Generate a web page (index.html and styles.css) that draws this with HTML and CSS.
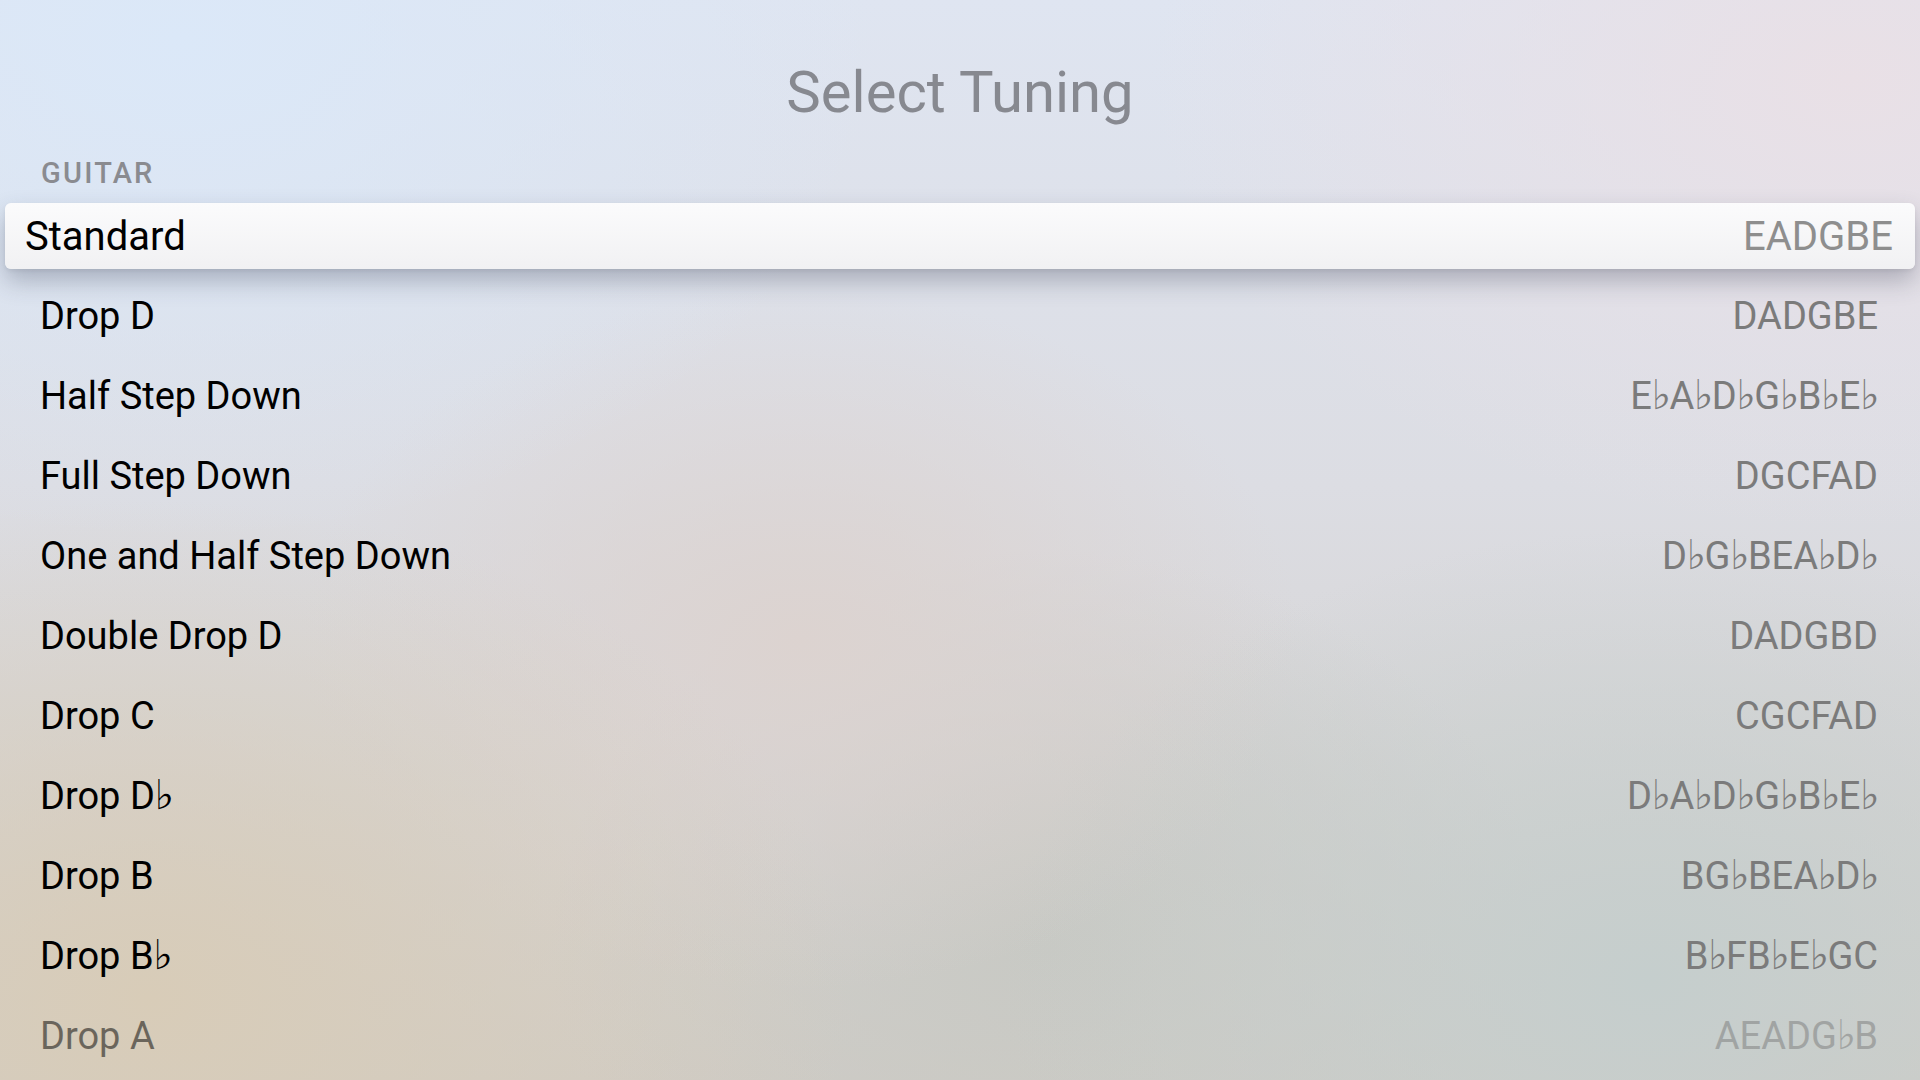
FILE: index.html
```html
<!DOCTYPE html>
<html lang="en">

<head>
    <title>Select Tuning</title>
    <link rel="stylesheet" href="styles.css">
</head>

<body>
    <div id="screen">
        <div class="title">
            <h1>Select Tuning</h1>
        </div>
        <div class="section">GUITAR</div>
        <div class="list">
            <div class="row focused">
                <span class="name">Standard</span>
                <span class="notes">EADGBE</span>
            </div>
            <div class="row">
                <span class="name">Drop D</span>
                <span class="notes">DADGBE</span>
            </div>
            <div class="row">
                <span class="name">Half Step Down</span>
                <span class="notes">E<i>♭</i>A<i>♭</i>D<i>♭</i>G<i>♭</i>B<i>♭</i>E<i>♭</i></span>
            </div>
            <div class="row">
                <span class="name">Full Step Down</span>
                <span class="notes">DGCFAD</span>
            </div>
            <div class="row">
                <span class="name">One and Half Step Down</span>
                <span class="notes">D<i>♭</i>G<i>♭</i>BEA<i>♭</i>D<i>♭</i></span>
            </div>
            <div class="row">
                <span class="name">Double Drop D</span>
                <span class="notes">DADGBD</span>
            </div>
            <div class="row">
                <span class="name">Drop C</span>
                <span class="notes">CGCFAD</span>
            </div>
            <div class="row">
                <span class="name">Drop D<i>♭</i></span>
                <span class="notes">D<i>♭</i>A<i>♭</i>D<i>♭</i>G<i>♭</i>B<i>♭</i>E<i>♭</i></span>
            </div>
            <div class="row">
                <span class="name">Drop B</span>
                <span class="notes">BG<i>♭</i>BEA<i>♭</i>D<i>♭</i></span>
            </div>
            <div class="row">
                <span class="name">Drop B<i>♭</i></span>
                <span class="notes">B<i>♭</i>FB<i>♭</i>E<i>♭</i>GC</span>
            </div>
            <div class="row fade">
                <span class="name">Drop A</span>
                <span class="notes">AEADG<i>♭</i>B</span>
            </div>
        </div>
    </div>
</body>

</html>
```

FILE: styles.css
```css
html,
body {
    margin: 0;
    padding: 0;
}

body {
    width: 1920px;
    height: 1080px;
    overflow: hidden;
    font-family: Roboto, 'Noto Sans', 'DejaVu Sans', sans-serif;
    background-color: #d9d8db;
    background-image:
        radial-gradient(ellipse 700px 500px at 180px 40px, #dbe8f8 0%, rgba(219, 232, 248, 0) 100%),
        radial-gradient(ellipse 700px 450px at 1850px 80px, #e9e0e6 0%, rgba(233, 224, 230, 0) 100%),
        radial-gradient(ellipse 700px 500px at 150px 1000px, #d8ccb8 0%, rgba(216, 204, 184, 0) 100%),
        radial-gradient(ellipse 650px 450px at 1650px 980px, #c5cecd 0%, rgba(197, 206, 205, 0) 100%),
        radial-gradient(ellipse 500px 350px at 800px 640px, #dcd3d0 0%, rgba(220, 211, 208, 0) 100%),
        radial-gradient(ellipse 500px 400px at 1050px 950px, #c8c9c4 0%, rgba(200, 201, 196, 0) 100%),
        linear-gradient(180deg, #dfe5f1 0%, #dcdde3 45%, #d0ccc6 100%);
}

#screen {
    display: flex;
    flex-direction: column;
}

.title {
    display: flex;
    justify-content: center;
    padding-top: 58px;
    height: 93px;
}

.title h1 {
    margin: 0;
    font-size: 58px;
    font-weight: 400;
    line-height: 68px;
    color: #878990;
}

.section {
    padding-left: 41px;
    font-size: 29px;
    font-weight: 500;
    line-height: 45px;
    color: #8a8b90;
    letter-spacing: 2.2px;
}

.list {
    display: flex;
    flex-direction: column;
}

.row {
    display: flex;
    justify-content: space-between;
    align-items: center;
    height: 80px;
    padding: 0 42px 0 40px;
    font-size: 38px;
    color: #000;
    white-space: nowrap;
}

.row i {
    font-style: normal;
    font-family: 'DejaVu Sans', sans-serif;
    font-size: 1.08em;
    line-height: 1;
    margin: 0 -0.035em 0 -0.01em;
}

.notes {
    color: #7b7b7b;
}

.row.focused {
    height: 66px;
    margin: 7px 5px;
    padding: 0 22px 0 20px;
    font-size: 40px;
    border-radius: 6px;
    background: linear-gradient(180deg, #fbfbfc 0%, #f1f1f3 100%);
    box-shadow: 0 12px 24px rgba(50, 56, 80, 0.3), 0 2px 4px rgba(0, 0, 0, 0.06);
}

.row.focused .notes {
    color: #8e8e8e;
}

.row.fade {
    opacity: 0.5;
}
```
